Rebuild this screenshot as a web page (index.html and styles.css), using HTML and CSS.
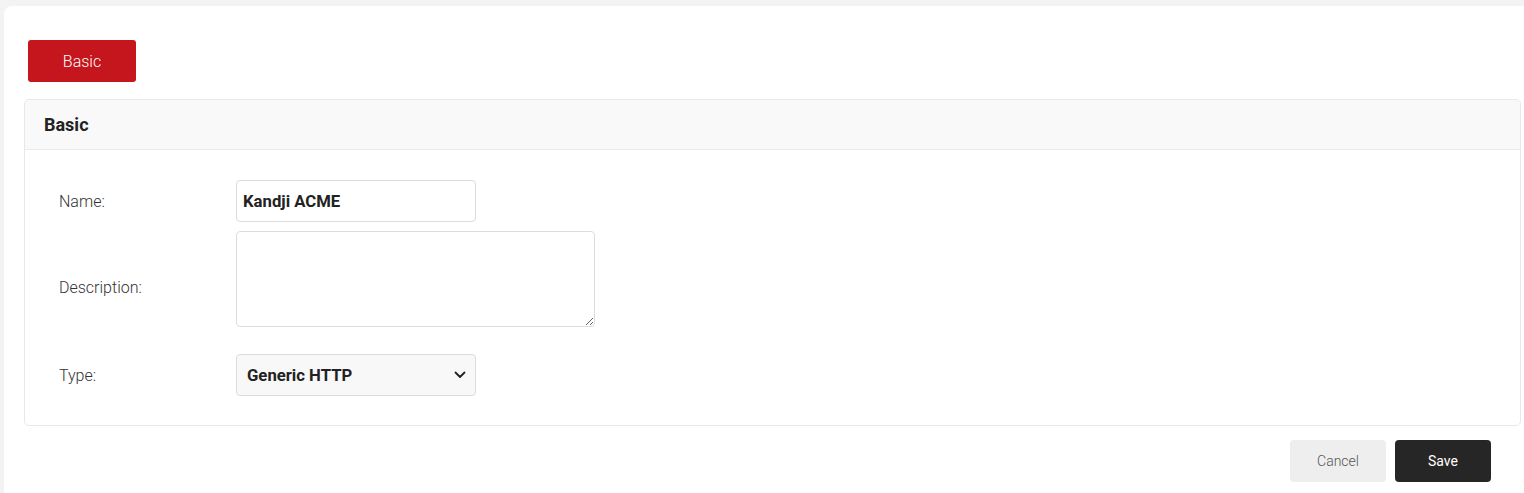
FILE: index.html
```html
<!DOCTYPE html>
<html>
<head>
<meta charset="utf-8">
<link rel="stylesheet" href="styles.css">
</head>
<body>
<div class="card">
  <button class="tab">Basic</button>
  <section class="panel">
    <div class="panel-head">Basic</div>
    <div class="panel-body">
      <div class="row row-name">
        <label class="lbl">Name:</label>
        <input class="field input" type="text" value="Kandji ACME">
      </div>
      <div class="row row-desc">
        <label class="lbl">Description:</label>
        <textarea class="field area"></textarea>
      </div>
      <div class="row row-type">
        <label class="lbl">Type:</label>
        <div class="field select">
          <span>Generic HTTP</span>
          <svg class="chev" width="12" height="8" viewBox="0 0 12 8"><path d="M1.5 1.5 L6 6 L10.5 1.5" fill="none" stroke="#222" stroke-width="1.8" stroke-linecap="round" stroke-linejoin="round"/></svg>
        </div>
      </div>
    </div>
  </section>
  <div class="actions">
    <button class="btn cancel">Cancel</button>
    <button class="btn save">Save</button>
  </div>
</div>
</body>
</html>
```

FILE: styles.css
```css
html, body {
  margin: 0;
  padding: 0;
  background: #f3f3f3;
  font-family: Roboto, "Liberation Sans", sans-serif;
  color: #333;
}
.card {
  margin: 6px 0 0 4px;
  background: #fff;
  border-top-left-radius: 8px;
  padding: 34px 3px 11px 20px;
  min-height: 442px;
  box-sizing: border-box;
}
.tab {
  display: block;
  margin-left: 4px;
  width: 108px;
  height: 42px;
  background: #c4161c;
  color: #fff;
  border: none;
  border-radius: 3px;
  font-family: Roboto, "Liberation Sans", sans-serif;
  font-size: 16px;
  font-weight: 300;
  padding: 0;
}
.panel {
  margin-top: 17px;
  border: 1px solid #e8e8e8;
  border-radius: 5px;
  overflow: hidden;
}
.panel-head {
  height: 49px;
  background: #f9f9f9;
  border-bottom: 1px solid #ececec;
  display: flex;
  align-items: center;
  padding-left: 19px;
  font-size: 18px;
  font-weight: 700;
  color: #222;
}
.panel-body {
  padding: 30px 0 29px 34px;
}
.row {
  display: flex;
  align-items: center;
}
.row-name { margin-bottom: 9px; }
.row-desc {
  margin-bottom: 11px;
  padding-bottom: 16px;
  align-items: flex-start;
}
.row-desc .lbl {
  align-self: center;
  margin-top: 16px;
}
.lbl {
  width: 177px;
  font-size: 16px;
  font-weight: 300;
  color: #333;
}
.field {
  box-sizing: border-box;
  border: 1px solid #dcdcdc;
  border-radius: 4px;
  font-family: Roboto, "Liberation Sans", sans-serif;
}
.input {
  width: 240px;
  height: 42px;
  padding: 0 6px;
  font-size: 16.7px;
  font-weight: 700;
  color: #222;
  background: #fff;
  outline: none;
}
.area {
  width: 359px;
  height: 96px;
  resize: both;
  display: block;
  background: #fff;
}
.select {
  width: 240px;
  height: 42px;
  background: #f8f8f8;
  display: flex;
  align-items: center;
  justify-content: space-between;
  padding: 0 9px 0 10px;
  font-size: 16.7px;
  font-weight: 700;
  color: #222;
}
.chev { display: block; }
.actions {
  display: flex;
  justify-content: flex-end;
  gap: 9px;
  margin-top: 14px;
  padding-right: 30px;
}
.btn {
  width: 96px;
  height: 42px;
  border: none;
  border-radius: 4px;
  font-family: Roboto, "Liberation Sans", sans-serif;
  font-size: 14px;
  padding: 0;
}
.cancel {
  background: #eeeeee;
  color: #555;
  font-weight: 300;
}
.save {
  background: #262626;
  color: #fff;
  font-weight: 400;
}
```
